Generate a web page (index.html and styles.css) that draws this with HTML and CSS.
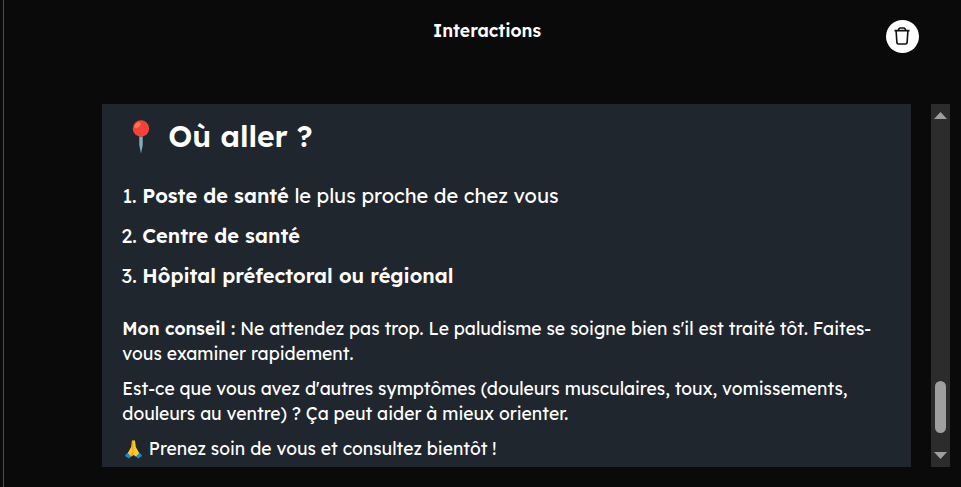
FILE: index.html
```html
<!DOCTYPE html>
<html lang="fr">
<head>
  <meta charset="UTF-8" />
  <meta name="viewport" content="width=device-width, initial-scale=1.0" />
  <title>Interactions</title>
  <link rel="stylesheet" href="styles.css">
</head>
<body>
  <main class="page">
    <header class="topbar">
      <h1 class="title">Interactions</h1>
      <button class="delete-btn" aria-label="Supprimer">
        <svg width="18" height="20" viewBox="0 0 18 20" fill="none" stroke="#111" stroke-width="1.6">
          <path d="M1.5 4.6h15M5.2 4.4l.8-1.7c.3-.5.7-.7 1.2-.7h3.6c.5 0 .9.2 1.2.7l.8 1.7M3.1 4.7l.8 12c.1.9.5 1.3 1.4 1.3h7.4c.9 0 1.3-.4 1.4-1.3l.8-12" />
        </svg>
      </button>
    </header>
    <div class="chat">
      <article class="message">
        <h2 class="heading">
          <svg class="pin" width="18" height="34" viewBox="0 0 18 34">
            <path d="M7.3 14h3.4v11L9 33.5 7.3 25z" fill="#82aec0" />
            <path d="M7.3 14h3.4v3H7.3z" fill="#2f7889" />
            <circle cx="9" cy="8.5" r="8.2" fill="#f44336" />
            <ellipse cx="5.6" cy="5.2" rx="3.6" ry="2.2" fill="#ff7555" transform="rotate(-42 5.6 5.2)" />
          </svg>
          <span>Où aller ?</span>
        </h2>
        <ol class="places">
          <li><b>Poste de santé</b> le plus proche de chez vous</li>
          <li><b>Centre de santé</b></li>
          <li><b>Hôpital préfectoral ou régional</b></li>
        </ol>
        <p><b>Mon conseil :</b> Ne attendez pas trop. Le paludisme se soigne bien s'il est traité tôt. Faites-<br>vous examiner rapidement.</p>
        <p>Est-ce que vous avez d'autres symptômes (douleurs musculaires, toux, vomissements,<br>douleurs au ventre) ? Ça peut aider à mieux orienter.</p>
        <p class="closing">
          <svg class="hands" width="17" height="19" viewBox="0 0 17 19">
            <path d="M1 14l3-2 3 4-3 2.5L0 16zM16 14l-3-2-3 4 3 2.5 4-2.5z" fill="#1e88c9" />
            <path d="M7 .5h3l.8 6.5 3.4 6-3.2 3.4L8.5 15 6 16.4 2.8 13l3.4-6z" fill="#ffca28" />
            <path d="M6.8 1.2L8.5.5v14L6 16.4l-1.2-1.2 2.5-3z" fill="#f6a51a" />
          </svg>
          <span>Prenez soin de vous et consultez bientôt !</span>
        </p>
      </article>
      <div class="scrollbar">
        <svg class="arrow" width="13" height="7" viewBox="0 0 13 7"><path d="M0 7L6.5 0 13 7z" fill="#9f9f9f" /></svg>
        <div class="thumb"></div>
        <svg class="arrow" width="13" height="7" viewBox="0 0 13 7"><path d="M0 0h13L6.5 7z" fill="#9f9f9f" /></svg>
      </div>
    </div>
  </main>
</body>
</html>
```
FILE: styles.css
```css
* {
  box-sizing: border-box;
}
body {
  margin: 0;
  background-color: #0a0a0a;
  color: #fff;
  font-family: Lexend, Inter, sans-serif;
  overflow: hidden;
}
.page {
  height: 487px;
  margin-left: 3px;
  border-left: 1px solid #4a4d59;
}
.topbar {
  display: grid;
  grid-template-columns: 1fr auto 1fr;
  height: 104px;
  padding: 18px 42px 0 51px;
}
.title {
  grid-column: 2;
  margin: 0;
  font-size: 17.5px;
  font-weight: 600;
  line-height: 25px;
}
.delete-btn {
  justify-self: end;
  display: flex;
  align-items: center;
  justify-content: center;
  width: 33.5px;
  height: 33.5px;
  margin-top: 1.5px;
  padding: 0;
  border: 0;
  border-radius: 50%;
  background-color: #fff;
}
.chat {
  display: flex;
  justify-content: space-between;
  height: 363px;
  padding: 0 11px 0 98px;
}
.message {
  width: 809px;
  padding: 12px 20px 0 20.3px;
  background-color: #20262d;
  white-space: nowrap;
  overflow: hidden;
}
.heading {
  display: flex;
  align-items: center;
  gap: 18px;
  height: 40px;
  margin: 0 0 20px;
  padding-left: 10px;
  font-size: 30px;
  font-weight: 600;
}
.pin {
  margin-top: 2px;
}
.places {
  margin: 0 0 20px;
  padding: 0 0 0 20px;
  font-size: 20px;
  line-height: 40px;
}
b {
  font-weight: 600;
}
p {
  margin: 0 0 10px;
  font-size: 17.5px;
  line-height: 25px;
}
.closing {
  display: flex;
  align-items: center;
  gap: 6.5px;
  padding-left: 3px;
}
.hands {
  margin-top: 2px;
}
.scrollbar {
  display: flex;
  flex-direction: column;
  align-items: center;
  width: 19px;
  padding: 8px 0;
  background-color: #2c2c2c;
}
.thumb {
  width: 11px;
  height: 52px;
  margin: auto 0 19px;
  border-radius: 6px;
  background-color: #9f9f9f;
}
```
